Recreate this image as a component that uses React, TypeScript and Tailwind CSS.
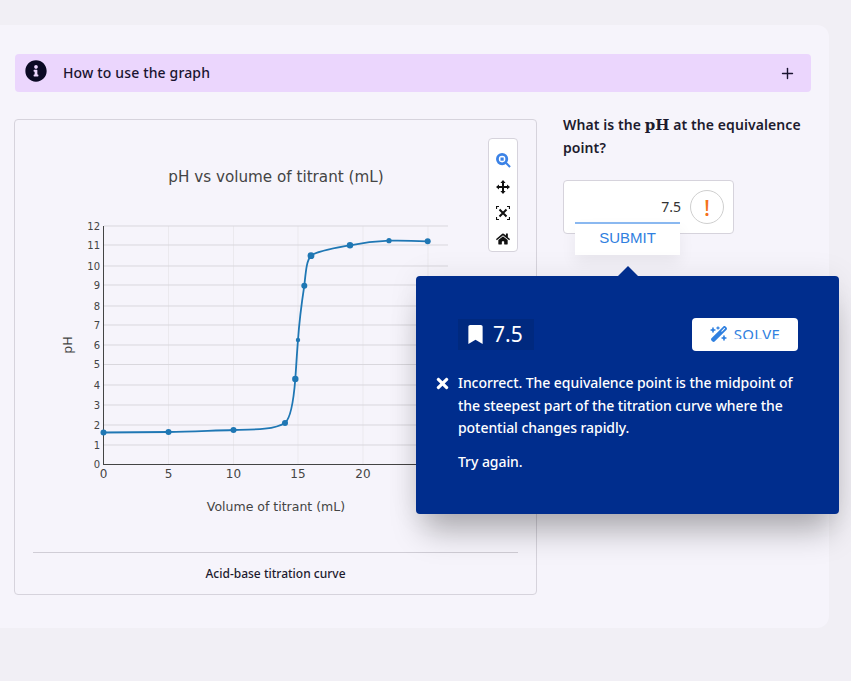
import { Plus } from 'lucide-react'
import { FaBookmark, FaHome, FaInfoCircle, FaTimes } from 'react-icons/fa'
import { FaWandMagicSparkles } from 'react-icons/fa6'

const yTicks = [
  [0, 464.5], [1, 445], [2, 425], [3, 405], [4, 385], [5, 364.5], [6, 345],
  [7, 325], [8, 306], [9, 285], [10, 266], [11, 245], [12, 226],
]
const xTicks = [[0, 103.5], [5, 168.5], [10, 233.5], [15, 298], [20, 363]]
const markers = [
  [103.5, 432.5, 3], [168.5, 432, 3], [233.5, 430, 3], [285, 423, 3], [295.3, 379, 3.2], [298, 340, 2.2],
  [304.3, 285.7, 3], [311, 255.7, 3.4], [350, 245.3, 3.2], [389, 240.7, 2.6], [427.7, 241.3, 3],
]

function TitrationChart() {
  return (
    <svg viewBox="15 120 521 432" className="block w-[521px] h-[432px]" style={{ fontFamily: '"DejaVu Sans", sans-serif' }}>
      <text x="276" y="182" textAnchor="middle" fontSize="15.2" fill="#444">pH vs volume of titrant (mL)</text>
      {[168.5, 233.5, 298, 363, 428].map(x => (
        <line key={x} x1={x} x2={x} y1="226" y2="464" stroke="#ebe9ee" strokeWidth="1" />
      ))}
      {yTicks.slice(1).map(([t, y]) => (
        <line key={t} x1="104" x2="448" y1={y} y2={y} stroke="#d9d7dd" strokeWidth="1" />
      ))}
      <line x1="103.5" x2="103.5" y1="226" y2="465" stroke="#444" strokeWidth="1" />
      <line x1="103" x2="448" y1="464.5" y2="464.5" stroke="#444" strokeWidth="1" />
      {yTicks.map(([t, y]) => (
        <text key={t} x="100" y={y + 3.5} textAnchor="end" fontSize="10" fill="#444">{t}</text>
      ))}
      {xTicks.map(([t, x]) => (
        <text key={t} x={x} y="478" textAnchor="middle" fontSize="12" fill="#444">{t}</text>
      ))}
      <text x="276" y="511" textAnchor="middle" fontSize="12.5" fill="#444">Volume of titrant (mL)</text>
      <text transform="translate(72 345) rotate(-90)" textAnchor="middle" fontSize="12.5" fill="#444">pH</text>
      <path
        d="M103.5 432.5 C130 432.4 150 432.3 168.5 432 C190 431.6 212 430.6 233.5 430 C252 429.6 274 430 285 423 C291 418 293.5 402 295.3 379 C296.5 362 297 352 298 340 C299.5 318 301.5 304 304.3 285.7 C306 270 306.5 261 311 255.7 C318 250.5 335 248 350 245.3 C364 242.5 376 241.2 389 240.7 C402 240.4 415 240.8 427.7 241.3"
        fill="none"
        stroke="#1f77b4"
        strokeWidth="1.8"
      />
      {markers.map(([x, y, r]) => (
        <circle key={x} cx={x} cy={y} r={r} fill="#1f77b4" />
      ))}
    </svg>
  )
}

function ZoomIcon() {
  return (
    <svg viewBox="0 0 16 16" className="w-[15px] h-[15px]">
      <circle cx="6.5" cy="6.5" r="5" fill="none" stroke="#3b82e6" strokeWidth="3" />
      <rect x="4.8" y="4.8" width="3.4" height="3.4" fill="#3b82e6" />
      <path d="M10.5 10.5 L15 15" stroke="#3b82e6" strokeWidth="2.2" />
    </svg>
  )
}

function PanIcon() {
  return (
    <svg viewBox="0 0 14 14" className="w-[14px] h-[14px]" fill="#111">
      <path d="M7 0l2.6 3H8v3h3V4.400l3 2.600-3 2.600V8H8v3h1.600L7 14l-2.600-3H6V8H3v1.600L0 7l3-2.600V6h3V3H4.400z" />
    </svg>
  )
}

function AutoscaleIcon() {
  return (
    <svg viewBox="0 0 14 14" className="w-[14px] h-[14px]" fill="none" stroke="#111">
      <path d="M.5 3V.5H3M11 .5h2.5V3M13.5 11v2.5H11M3 13.5H.5V11" strokeWidth="1.2" />
      <path d="M3.5 3.5l7 7M10.500 3.500l-7 7" strokeWidth="2" />
    </svg>
  )
}

export default function App() {
  return (
    <div className="min-h-[681px] bg-[#f1eff5] pt-[25px]" style={{ fontFamily: '"Noto Sans", sans-serif' }}>
      <div className="relative w-[829px] h-[603px] rounded-r-xl bg-[#f6f4fb] px-[15px] pt-[29px]">
        {/* Banner */}
        <div className="flex items-center justify-between w-[796px] h-[38px] rounded bg-[#ebd6fd] pl-[10px] pr-[15px]">
          <div className="flex items-center">
            <FaInfoCircle size={22} color="#0b0a24" className="-mt-1" />
            <span className="ml-[16px] text-sm font-medium tracking-[0.15px] text-[#1a1430]">How to use the graph</span>
          </div>
          <Plus size={17} strokeWidth={2} color="#1a1430" />
        </div>

        <div className="flex mt-[27px] -ml-px">
          {/* Chart card */}
          <div className="relative w-[523px] h-[476px] rounded border border-[#d6d3dc]">
            <TitrationChart />
            <div className="mx-[18px] w-[485px] border-t border-[#d0cdd6]" />
            <p className="mt-[13px] text-center text-xs font-medium text-[#1d1b2e]">Acid-base titration curve</p>
            <div className="absolute left-[473px] top-[18px] flex flex-col items-center justify-between w-[30px] h-[114px] rounded bg-white border border-[#d6d3dc] pt-[14px] pb-[5px]">
              <ZoomIcon />
              <PanIcon />
              <AutoscaleIcon />
              <FaHome size={14} color="#111" />
            </div>
          </div>

          {/* Question column */}
          <div className="ml-[26px] w-[240px]">
            <p className="-mt-[6px] text-sm leading-[23px] font-semibold tracking-[0.08px] text-[#1d1b2e]">
              What is the <span className="text-[15px] leading-none font-semibold" style={{ fontFamily: '"DejaVu Serif", serif' }}>pH</span> at the equivalence point?
            </p>
            <div className="relative mt-[21px] flex items-center justify-end w-[171px] h-[54px] rounded-sm bg-white border border-[#d6d3dc] pr-[9px]">
              <span className="mr-[9px] text-sm text-[#333]">7.5</span>
              <div className="flex items-center justify-center w-[34px] h-[34px] rounded-full border border-[#cfcfcf]">
                <span className="text-[22px] leading-none font-medium text-[#f4721a]">!</span>
              </div>
              <button className="absolute left-[11px] top-[41px] w-[105px] h-[33px] border-t-2 border-[#8ab8f0] bg-white pb-[3px] text-[15px] text-[#2f80e0] shadow-[0_8px_16px_rgba(0,0,0,0.06)]" style={{ fontFamily: '"Liberation Sans", sans-serif' }}>
                SUBMIT
              </button>
            </div>
          </div>
        </div>

        {/* Feedback popover */}
        <div className="absolute left-[416px] top-[251px] w-[423px] h-[238px] rounded-sm bg-[#002d8d] text-white shadow-[0_25px_30px_-8px_rgba(0,0,0,0.28),0_0_30px_rgba(0,0,0,0.08)]">
          <div className="absolute left-[202px] -top-[10px] w-0 h-0 border-x-[10px] border-x-transparent border-b-[10px] border-b-[#002d8d]" />
          <div className="flex items-center justify-between pl-[42px] pr-[41px] pt-[42px]">
            <div className="flex items-center w-[76px] h-[31px] bg-[#00297f] pl-[8px]">
              <FaBookmark size={19} />
              <span className="ml-[8px] text-[21px]">7.5</span>
            </div>
            <div className="flex items-start justify-center gap-[6px] w-[106px] h-[33px] rounded-sm bg-white pt-[7px] text-[#2f80e0]">
              <FaWandMagicSparkles size={18} />
              <span className="block h-[14px] overflow-hidden text-[15px] leading-[19px] tracking-[0.3px]">SOLVE</span>
            </div>
          </div>
          <div className="flex mt-[21px] pl-[18px] pr-[40px]">
            <FaTimes size={17} className="mt-[3px] shrink-0" />
            <div className="ml-[7px] text-sm font-medium leading-[22.5px] tracking-[-0.06px]">
              <p>Incorrect. The equivalence point is the midpoint of the steepest part of the titration curve where the potential changes rapidly.</p>
              <p className="mt-[11px]">Try again.</p>
            </div>
          </div>
        </div>
      </div>
    </div>
  )
}
